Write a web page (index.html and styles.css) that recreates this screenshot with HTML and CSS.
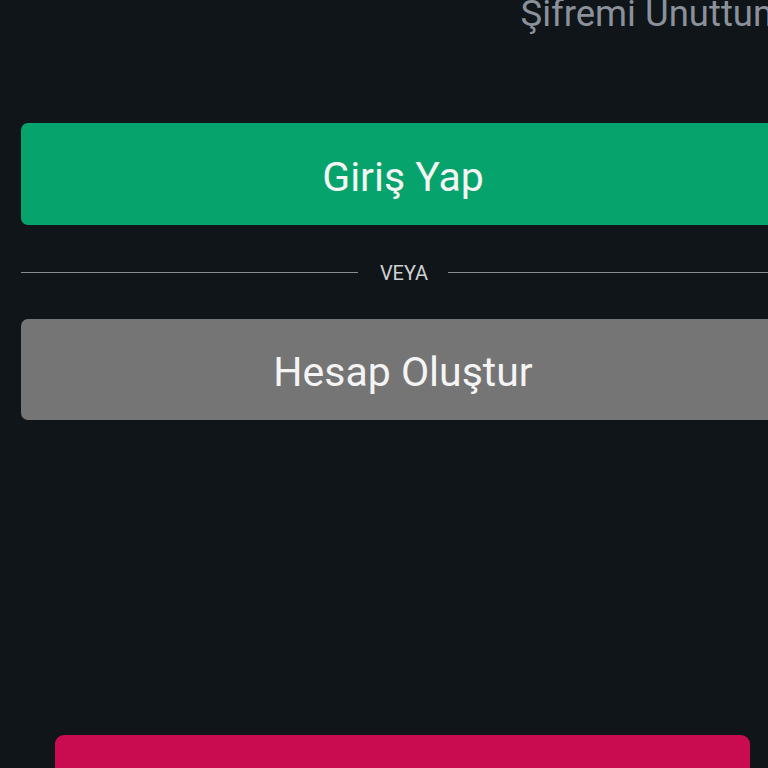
FILE: index.html
```html
<!DOCTYPE html>
<html lang="tr">
<head>
<meta charset="utf-8">
<title>Giriş</title>
<link rel="stylesheet" href="styles.css">
</head>
<body>
<main class="page">
  <div class="forgot">Şifremi Unuttum</div>
  <button class="btn btn-login">Giriş Yap</button>
  <div class="divider"><span class="line"></span><span class="or">VEYA</span><span class="line"></span></div>
  <button class="btn btn-register">Hesap Oluştur</button>
  <div class="bottom-bar"></div>
</main>
</body>
</html>
```
FILE: styles.css
```css
html, body {
  margin: 0;
  padding: 0;
}
body {
  background: #0f1519;
  width: 768px;
  height: 768px;
  overflow: hidden;
  font-family: Roboto, "Liberation Sans", sans-serif;
}
.page {
  width: 764px;
  margin-left: 21px;
  display: flex;
  flex-direction: column;
}
.forgot {
  margin-top: -7px;
  font-size: 36.5px;
  line-height: 42px;
  color: #8b919a;
  text-align: right;
  white-space: nowrap;
}
.btn {
  display: flex;
  align-items: center;
  justify-content: center;
  height: 102px;
  padding: 5px 0 0;
  border: none;
  border-radius: 7px;
  font-family: Roboto, "Liberation Sans", sans-serif;
  font-size: 41px;
  color: #f4f4f4;
  width: 100%;
}
.btn-login {
  margin-top: 88px;
  background: #06a46c;
}
.divider {
  display: flex;
  align-items: center;
  height: 22px;
  margin-top: 36px;
}
.line {
  flex: 1;
  height: 1px;
  background: #8a8d90;
}
.or {
  padding: 2px 20px 0 22px;
  font-size: 20px;
  color: #cfd1d3;
}
.btn-register {
  margin-top: 36px;
  background: #757575;
  height: 101px;
}
.bottom-bar {
  margin-top: 315px;
  margin-left: 34px;
  width: 695px;
  height: 33px;
  border-radius: 9px 9px 0 0;
  background: #c90c50;
}
```
